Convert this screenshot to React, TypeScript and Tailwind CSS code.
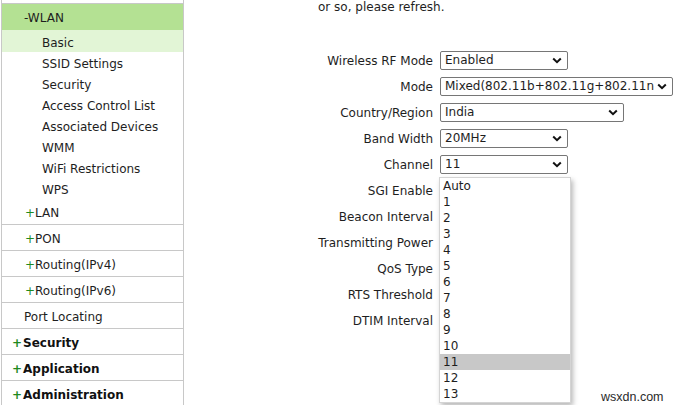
import React from 'react';

type NavItem = { label: string; kind: 'group' | 'sub' | 'top' | 'plain' };

const wlanItems = ['SSID Settings', 'Security', 'Access Control List', 'Associated Devices', 'WMM', 'WiFi Restrictions', 'WPS'];

const navRest: NavItem[] = [
  { label: 'LAN', kind: 'group' },
  { label: 'PON', kind: 'group' },
  { label: 'Routing(IPv4)', kind: 'group' },
  { label: 'Routing(IPv6)', kind: 'group' },
  { label: 'Port Locating', kind: 'plain' },
  { label: 'Security', kind: 'top' },
  { label: 'Application', kind: 'top' },
  { label: 'Administration', kind: 'top' },
];

const channels = ['Auto', '1', '2', '3', '4', '5', '6', '7', '8', '9', '10', '11', '12', '13'];

function Chevron() {
  return (
    <svg width="10" height="7" viewBox="0 0 10 7" className="shrink-0">
      <polyline points="1.2,1.5 5,5.2 8.8,1.5" fill="none" stroke="#111" strokeWidth="2" />
    </svg>
  );
}

function Select({ value, width }: { value: string; width: string }) {
  return (
    <div className={`${width} h-[19px] flex items-center border border-[#767676] rounded-[2px] pl-[4px] pr-[5px] bg-white`}>
      <span className="flex-1 overflow-hidden whitespace-nowrap leading-[17px] pt-px">{value}</span>
      <Chevron />
    </div>
  );
}

const fields: { label: string; value?: string; width?: string }[] = [
  { label: 'Wireless RF Mode', value: 'Enabled', width: 'w-[128px]' },
  { label: 'Mode', value: 'Mixed(802.11b+802.11g+802.11n', width: 'w-[233px]' },
  { label: 'Country/Region', value: 'India', width: 'w-[184px]' },
  { label: 'Band Width', value: '20MHz', width: 'w-[128px]' },
  { label: 'Channel', value: '11', width: 'w-[128px]' },
  { label: 'SGI Enable' },
  { label: 'Beacon Interval' },
  { label: 'Transmitting Power' },
  { label: 'QoS Type' },
  { label: 'RTS Threshold' },
  { label: 'DTIM Interval' },
];

export default function App() {
  return (
    <div className="relative w-[675px] h-[405px] overflow-hidden bg-white text-[12px] text-[#1e1e1e] font-['DejaVu_Sans',sans-serif]">
      <div className="flex">
        {/* left menu */}
        <aside className="ml-px w-[183px] h-[405px] shrink-0 border-l border-r border-[#c8c8c8]">
          <div className="h-[4px] border-b border-[#c8c8c8]" />
          <div className="h-[26px] flex items-center pl-[22px] pt-[2px] bg-[#b4e193]">-WLAN</div>
          <div className="h-[22px] flex items-center pl-[40px] pt-[3px] bg-[#e2f5d6]">Basic</div>
          {wlanItems.map((s) => (
            <div key={s} className="h-[21px] flex items-center pl-[40px] pt-[2px]">
              {s}
            </div>
          ))}
          {navRest.map((n) => (
            <div key={n.label} className="h-[26px] flex items-center pt-[3px] border-b border-[#c8c8c8]">
              {n.kind === 'group' && (
                <span className="pl-[23px]">
                  <span className="text-[#1f8a1f]">+</span>
                  {n.label}
                </span>
              )}
              {n.kind === 'plain' && <span className="pl-[22px]">{n.label}</span>}
              {n.kind === 'top' && (
                <span className="pl-[10px] font-bold text-[#111]">
                  <span className="text-[#1f8a1f] mr-px">+</span>
                  {n.label}
                </span>
              )}
            </div>
          ))}
        </aside>

        {/* wireless basic settings */}
        <main className="flex-1">
          <p className="mt-[-1px] pl-[134px] leading-[16px]">or so, please refresh.</p>
          <div className="mt-[32px]">
            {fields.map((f) => (
              <div key={f.label} className="h-[26px] flex items-center">
                <div className="w-[249px] text-right whitespace-nowrap pt-[2px]">{f.label}</div>
                {f.value && (
                  <div className="ml-[7px]">
                    <Select value={f.value} width={f.width ?? 'w-[128px]'} />
                  </div>
                )}
              </div>
            ))}
          </div>
        </main>
      </div>

      {/* open channel list */}
      <div className="absolute left-[439px] top-[177px] w-[132px] bg-white border border-[#d4d4d4] shadow-[2px_3px_5px_rgba(0,0,0,0.28)]">
        {channels.map((c) => (
          <div key={c} className={`h-[16px] leading-[16px] pl-[3px] ${c === '11' ? 'bg-[#c8c8c8]' : ''}`}>
            {c}
          </div>
        ))}
      </div>

      <div className="absolute left-[601px] top-[389px] text-[12.5px] leading-[16px] text-[#2a2a2a] font-['Liberation_Sans',sans-serif]">
        wsxdn.com
      </div>
    </div>
  );
}
